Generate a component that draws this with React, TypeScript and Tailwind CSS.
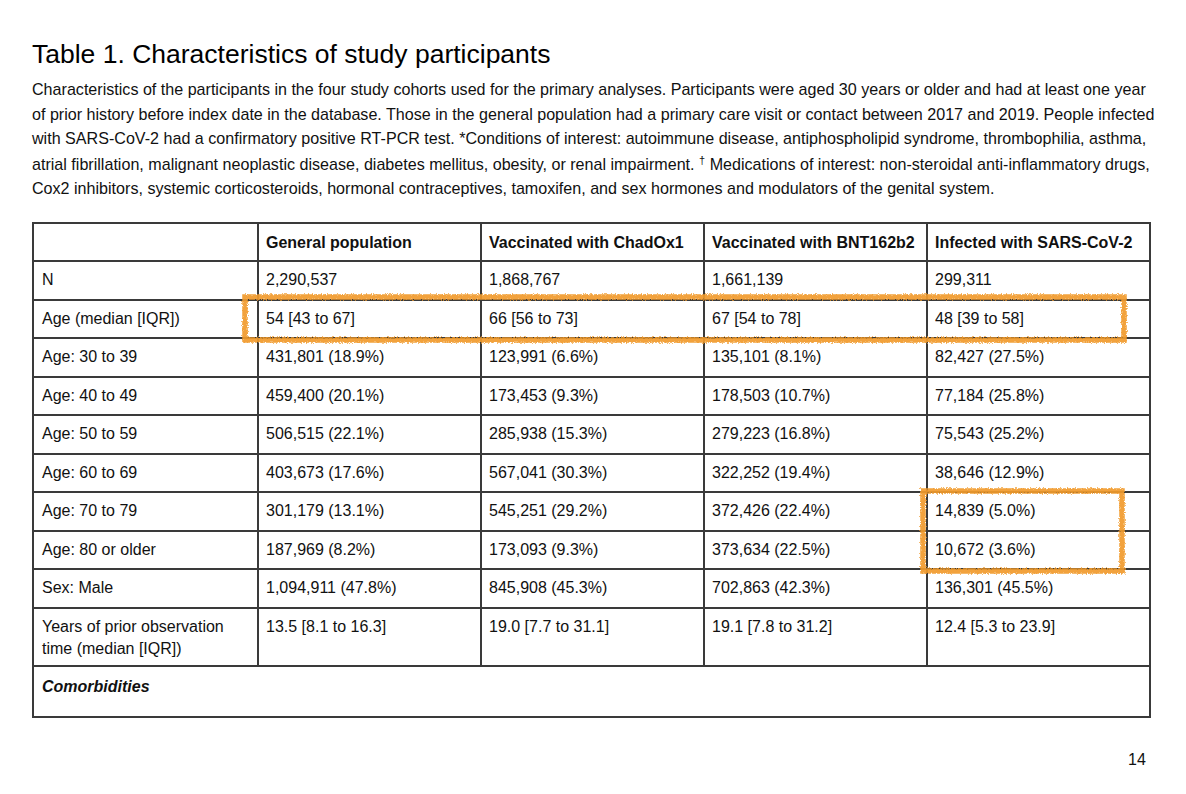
import React from "react";

const rows: { label: React.ReactNode; vals: string[]; tall?: boolean }[] = [
  { label: "N", vals: ["2,290,537", "1,868,767", "1,661,139", "299,311"] },
  { label: "Age (median [IQR])", vals: ["54 [43 to 67]", "66 [56 to 73]", "67 [54 to 78]", "48 [39 to 58]"] },
  { label: "Age: 30 to 39", vals: ["431,801 (18.9%)", "123,991 (6.6%)", "135,101 (8.1%)", "82,427 (27.5%)"] },
  { label: "Age: 40 to 49", vals: ["459,400 (20.1%)", "173,453 (9.3%)", "178,503 (10.7%)", "77,184 (25.8%)"] },
  { label: "Age: 50 to 59", vals: ["506,515 (22.1%)", "285,938 (15.3%)", "279,223 (16.8%)", "75,543 (25.2%)"] },
  { label: "Age: 60 to 69", vals: ["403,673 (17.6%)", "567,041 (30.3%)", "322,252 (19.4%)", "38,646 (12.9%)"] },
  { label: "Age: 70 to 79", vals: ["301,179 (13.1%)", "545,251 (29.2%)", "372,426 (22.4%)", "14,839 (5.0%)"] },
  { label: "Age: 80 or older", vals: ["187,969 (8.2%)", "173,093 (9.3%)", "373,634 (22.5%)", "10,672 (3.6%)"] },
  { label: "Sex: Male", vals: ["1,094,911 (47.8%)", "845,908 (45.3%)", "702,863 (42.3%)", "136,301 (45.5%)"] },
  {
    label: (
      <>
        Years of prior observation
        <br />
        time (median [IQR])
      </>
    ),
    vals: ["13.5 [8.1 to 16.3]", "19.0 [7.7 to 31.1]", "19.1 [7.8 to 31.2]", "12.4 [5.3 to 23.9]"],
    tall: true,
  },
];

const headers = ["General population", "Vaccinated with ChadOx1", "Vaccinated with BNT162b2", "Infected with SARS-CoV-2"];

export default function App() {
  return (
    <div
      className="relative w-[1186px] h-[794px] bg-white text-[#111] overflow-hidden"
      style={{ fontFamily: '"Liberation Sans", Arial, Helvetica, sans-serif' }}
    >
      <div className="pl-[32px] pt-[38px]">
        <h1 className="text-[26.5px] leading-[32px] text-black">Table 1. Characteristics of study participants</h1>
        <div className="mt-[7px] text-[16.1px] leading-[24.5px] whitespace-nowrap">
          <div>
            Characteristics of the participants in the four study cohorts used for the primary analyses. Participants were aged 30 years or older and had at least one year
          </div>
          <div>
            of prior history before index date in the database. Those in the general population had a primary care visit or contact between 2017 and 2019. People infected
          </div>
          <div>
            with SARS-CoV-2 had a confirmatory positive RT-PCR test. *Conditions of interest: autoimmune disease, antiphospholipid syndrome, thrombophilia, asthma,
          </div>
          <div className="pt-[1px]">
            atrial fibrillation, malignant neoplastic disease, diabetes mellitus, obesity, or renal impairment.{" "}
            <sup className="text-[11px]">†</sup> Medications of interest: non-steroidal anti-inflammatory drugs,
          </div>
          <div>
            Cox2 inhibitors, systemic corticosteroids, hormonal contraceptives, tamoxifen, and sex hormones and modulators of the genital system.
          </div>
        </div>

        <table className="mt-[21px] w-[1117px] table-fixed border-collapse border-2 border-[#2a2a2a] text-[16px] leading-[22px]">
          <colgroup>
            <col className="w-[225px]" />
            <col className="w-[223px]" />
            <col className="w-[223px]" />
            <col className="w-[223px]" />
            <col className="w-[223px]" />
          </colgroup>
          <thead>
            <tr className="h-[38.5px]">
              <th className="border-2 border-[#3a3a3a]" />
              {headers.map((h) => (
                <th key={h} className="border-2 border-[#3a3a3a] text-left font-bold align-top pt-[8px] pl-[7px] whitespace-nowrap">
                  {h}
                </th>
              ))}
            </tr>
          </thead>
          <tbody>
            {rows.map((r, i) => (
              <tr key={i} className={r.tall ? "h-[58px]" : "h-[38.5px]"}>
                <td className="border-2 border-[#3a3a3a] align-top pt-[7px] pl-[8px]">{r.label}</td>
                {r.vals.map((v, j) => (
                  <td key={j} className="border-2 border-[#3a3a3a] align-top pt-[7px] pl-[7px] whitespace-nowrap">
                    {v}
                  </td>
                ))}
              </tr>
            ))}
            <tr className="h-[51px]">
              <td colSpan={5} className="border-2 border-[#3a3a3a] align-top pt-[9px] pl-[8px] font-bold italic">
                Comorbidities
              </td>
            </tr>
          </tbody>
        </table>
      </div>

      <div className="absolute left-[1128px] top-[750px] text-[16px] leading-[20px]">14</div>

      <svg className="absolute inset-0 pointer-events-none" width="1186" height="794">
        <defs>
          <filter id="rough" x="-5%" y="-5%" width="110%" height="110%">
            <feTurbulence type="fractalNoise" baseFrequency="0.8" numOctaves="2" seed="3" />
            <feDisplacementMap in="SourceGraphic" scale="4" />
          </filter>
        </defs>
        <g fill="none" stroke="#f19a2c" strokeWidth="5.5" strokeOpacity="0.92" filter="url(#rough)">
          <rect x="245" y="297" width="879" height="43" />
          <rect x="923" y="491" width="199" height="80" />
        </g>
      </svg>
    </div>
  );
}
